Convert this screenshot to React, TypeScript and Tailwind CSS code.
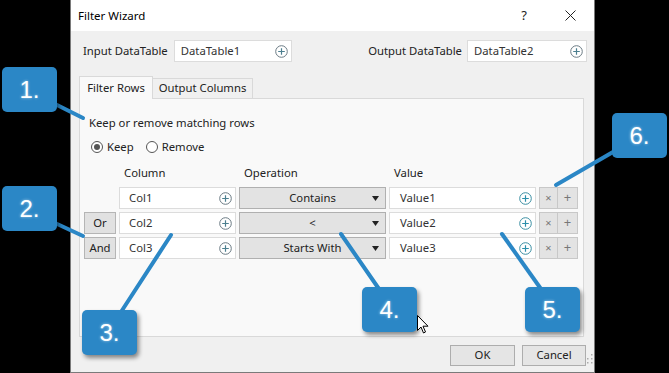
import React from 'react'

const font = "font-['Segoe_UI','Noto_Sans',sans-serif]"

function PlusCircle({ teal = false }: { teal?: boolean }) {
    return (
        <svg width="13" height="13" viewBox="0 0 13 13" className="shrink-0">
            <circle cx="6.5" cy="6.5" r="5.8" fill="none" stroke={teal ? '#3c8fa3' : '#6b7b84'} strokeWidth="1" />
            <path d="M6.5 3.2v6.6M3.2 6.5h6.6" stroke={teal ? '#2b8fab' : '#4c7f8f'} strokeWidth="1.2" />
        </svg>
    )
}

function TextBox({ value, className = '', pad = 'pl-[9px]', teal = false }: { value: string; className?: string; pad?: string; teal?: boolean }) {
    return (
        <div className={`h-[22px] bg-white border border-[#dcdcdc] flex items-center justify-between pr-[3px] ${pad} ${className}`}>
            <span className="text-[11.3px] text-[#333]">{value}</span>
            <PlusCircle teal={teal} />
        </div>
    )
}

function Radio({ checked }: { checked?: boolean }) {
    return (
        <span className="w-[12px] h-[12px] rounded-full border border-[#555] bg-white flex items-center justify-center">
            {checked && <span className="w-[6px] h-[6px] rounded-full bg-[#555]" />}
        </span>
    )
}

function Callout({ n, className }: { n: string; className: string }) {
    return (
        <div className={`absolute w-[55px] h-[45px] rounded-[5px] bg-[#2b87c6] shadow-[2px_3px_4px_rgba(0,0,0,0.45)] flex items-center justify-center text-white text-[24px] font-['Liberation_Sans',sans-serif] [text-shadow:0_0_3px_rgba(255,255,255,0.6)] ${className}`}>
            {n}
        </div>
    )
}

const rows = [
    { logic: '', col: 'Col1', op: 'Contains', val: 'Value1' },
    { logic: 'Or', col: 'Col2', op: '<', val: 'Value2' },
    { logic: 'And', col: 'Col3', op: 'Starts With', val: 'Value3' },
]

export default function App() {
    return (
        <div className={`relative w-[669px] h-[373px] bg-black overflow-hidden ${font}`}>
            <div className="ml-[70px] w-[525px] h-[373px] flex flex-col bg-[#f0f0f0] border-x border-b border-[#7a7a7a]">
                {/* title bar */}
                <div className="h-[31px] bg-white flex items-center pl-[7px] pr-[18px] shrink-0">
                    <span className="text-[11.5px] text-black">Filter Wizard</span>
                    <span className="ml-auto text-[13px] text-[#222] mr-[38px]">?</span>
                    <svg width="11" height="11" viewBox="0 0 11 11">
                        <path d="M0.5 0.5l10 10M10.5 0.5l-10 10" stroke="#222" strokeWidth="1" />
                    </svg>
                </div>

                {/* datatable row */}
                <div className="flex items-center pl-[12px] pr-[7px] mt-[9px]">
                    <span className="text-[11.3px] text-[#222]">Input DataTable</span>
                    <TextBox value="DataTable1" className="ml-[6px] w-[118px]" pad="pl-[6px]" />
                    <span className="ml-auto text-[11.3px] text-[#222]">Output DataTable</span>
                    <TextBox value="DataTable2" className="ml-[5px] w-[120px]" pad="pl-[6px]" />
                </div>

                {/* tabs */}
                <div className="ml-[8px] mr-[10px] mt-[13px] flex flex-col">
                    <div className="flex items-end h-[23px]">
                        <div className="h-[23px] w-[74px] bg-[#f9f9f9] border border-b-0 border-[#d9d9d9] flex items-center justify-center text-[11.3px] text-[#222] relative z-10 -mb-px">
                            Filter Rows
                        </div>
                        <div className="h-[20px] w-[100px] bg-[#f0f0f0] border border-l-0 border-b-0 border-[#d9d9d9] flex items-center justify-center text-[11.3px] text-[#222]">
                            Output Columns
                        </div>
                    </div>
                    <div className="h-[239px] bg-[#f9f9f9] border border-[#d9d9d9] flex flex-col">
                        <div className="pl-[9px] mt-[16px] text-[11.3px] text-[#222] leading-[16px]">Keep or remove matching rows</div>
                        <div className="pl-[11px] mt-[8px] flex items-center text-[11.3px] text-[#222] leading-[16px]">
                            <Radio checked />
                            <span className="ml-[4px]">Keep</span>
                            <span className="ml-[12px]"><Radio /></span>
                            <span className="ml-[4px]">Remove</span>
                        </div>
                        <div className="grid grid-cols-[32px_117px_147px_147px_39px] gap-x-[3px] gap-y-[3px] pl-[4px] mt-[10px]">
                            <span />
                            <span className="pl-[5px] text-[11.3px] text-[#222] h-[19px] leading-[16px]">Column</span>
                            <span className="pl-[5px] text-[11.3px] text-[#222] leading-[16px]">Operation</span>
                            <span className="pl-[5px] text-[11.3px] text-[#222] leading-[16px]">Value</span>
                            <span />
                            {rows.map((r, i) => (
                                <React.Fragment key={i}>
                                    {r.logic ? (
                                        <div className="h-[22px] bg-[#e1e1e1] border border-[#b5b5b5] flex items-center justify-center text-[11.3px] text-[#222]">
                                            {r.logic}
                                        </div>
                                    ) : (
                                        <span />
                                    )}
                                    <TextBox value={r.col} />
                                    <div className="h-[22px] bg-[#e3e3e3] border border-[#b0b0b0] flex items-center relative">
                                        <span className="flex-1 text-center text-[11.3px] text-[#222]">{r.op}</span>
                                        <svg width="7" height="5" viewBox="0 0 7 5" className="absolute right-[6px] top-[8px]">
                                            <path d="M0 0h7L3.5 5z" fill="#222" />
                                        </svg>
                                    </div>
                                    <TextBox value={r.val} pad="pl-[10px]" teal />
                                    <div className="h-[22px] flex">
                                        <div className="w-[19px] bg-[#e3e3e3] border border-[#c8c8c8] flex items-center justify-center text-[11px] text-[#777]">×</div>
                                        <div className="w-[20px] bg-[#e3e3e3] border border-l-0 border-[#c8c8c8] flex items-center justify-center text-[13px] text-[#777]">+</div>
                                    </div>
                                </React.Fragment>
                            ))}
                        </div>
                    </div>
                </div>

                {/* footer */}
                <div className="flex justify-end items-center gap-[7px] pr-[8px] mt-[8px] relative">
                    <div className="w-[65px] h-[21px] bg-[#e5e5e5] border border-[#adadad] flex items-center justify-center text-[11.3px] text-[#222]">OK</div>
                    <div className="w-[64px] h-[21px] bg-[#e5e5e5] border border-[#adadad] flex items-center justify-center text-[11.3px] text-[#222]">Cancel</div>
                    <svg width="6" height="10" viewBox="0 0 6 10" className="absolute right-[1px] top-[9px]">
                        <rect x="4" y="0" width="1.5" height="1.5" fill="#aaa" />
                        <rect x="4" y="4" width="1.5" height="1.5" fill="#aaa" />
                        <rect x="0" y="4" width="1.5" height="1.5" fill="#aaa" />
                        <rect x="4" y="8" width="1.5" height="1.5" fill="#aaa" />
                        <rect x="0" y="8" width="1.5" height="1.5" fill="#aaa" />
                    </svg>
                </div>
            </div>

            {/* callout pointers */}
            <svg className="absolute inset-0 pointer-events-none" width="669" height="373">
                <g stroke="#2b87c6" strokeWidth="4" strokeLinecap="round">
                    <line x1="55" y1="104" x2="83" y2="118" />
                    <line x1="55" y1="223" x2="83" y2="236" />
                    <line x1="121" y1="312" x2="171" y2="235" />
                    <line x1="379" y1="289" x2="341" y2="234" />
                    <line x1="541" y1="289" x2="502" y2="234" />
                    <line x1="613" y1="152" x2="556" y2="185" />
                </g>
            </svg>

            <Callout n="1." className="left-[2px] top-[67px]" />
            <Callout n="2." className="left-[2px] top-[186px]" />
            <Callout n="3." className="left-[82px] top-[310px]" />
            <Callout n="4." className="left-[362px] top-[287px]" />
            <Callout n="5." className="left-[525px] top-[287px]" />
            <Callout n="6." className="left-[612px] top-[113px]" />

            {/* mouse cursor */}
            <svg className="absolute left-[417px] top-[315px]" width="12" height="19" viewBox="0 0 12 19">
                <path d="M0.5 0.5v15l3.5-3.5 2.5 6 2-1-2.5-5.8h5z" fill="white" stroke="black" strokeWidth="1" />
            </svg>
        </div>
    )
}
